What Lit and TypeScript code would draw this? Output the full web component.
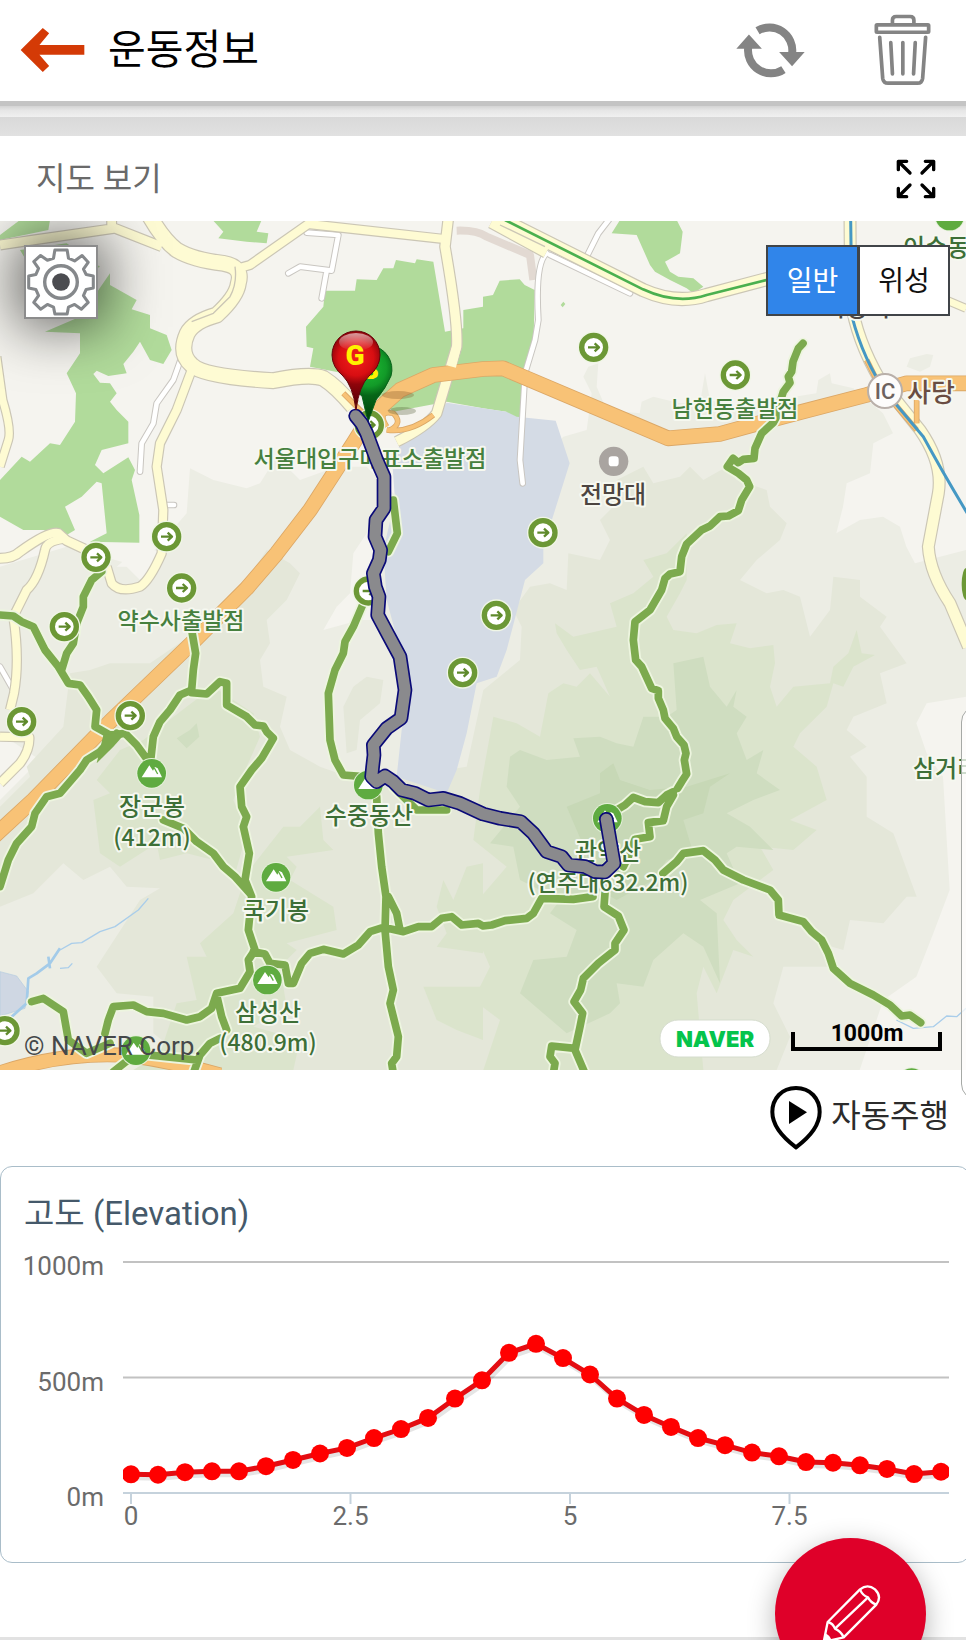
import { LitElement, html, svg, css } from "lit";
import { customElement, state } from "lit/decorators.js";

type Point = [number, number];

/* Terrain and road geometry is stored at three units per map pixel. */
const HILLS: { fill: string; d: string }[] = [
  {
    fill: "#ecede4",
    d: "M570 1405L640 1440 740 1465 780 1450 830 1370 900 1440 1010 1400 1100 1400 1200 1500 1500 1500 1690 1310 1760 1290 1775 1180 1750 1130 1765 1100 1795 1090 1790 1160 1820 1230 1919 1240 1925 1205 1960 1190 2040 1210 2100 1210 2115 1120 2130 1200 2200 1220 2449 1180 2455 1140 2490 1120 2495 1150 2560 1165 2649 1240 2679 1300 2620 1330 2610 1420 2540 1450 2529 1520 2509 1600 2580 1560 2649 1550 2700 1580 2719 1640 2745 1690 2898 1650 2898 2090 2780 2110 2749 2170 2780 2260 2829 2330 2849 2670 2800 2800 2749 2930 2650 3000 2579 3210 0 3210 0 2400 120 2280 0 2200 0 1700 200 1640 420 1700 560 1540Z",
  },
  {
    fill: "#f5f4ef",
    d: "M1060 1660L1100 1600 1120 1560 1130 1660 1120 1860 1080 1860 970 1890 1010 1820 1050 1780ZM420 1640L500 1660 480 1700 420 1740 380 1700 350 1700Z",
  },
  {
    fill: "#ecede4",
    d: "M2720 1100L2730 1075 2780 1062 2800 1065 2790 1100 2760 1115Z",
  },
  {
    fill: "#e4e7d9",
    d: "M0 2420L90 2330 80 2300 190 2180 210 2020 270 2010 330 1990 450 1990 640 1860 740 1740 800 1650 870 1690 900 1720 860 1800 800 1860 810 1930 780 1980 790 2060 860 2090 840 2180 870 2250 960 2300 1100 2350 1200 2330 1400 2300 1450 2070 1560 1980 1565 1880 1540 1830 1590 1760 1650 1750 1700 1770 1705 1660 1800 1680 1830 1620 1800 1560 1860 1500 1850 1440 1930 1400 1960 1450 2040 1430 2070 1400 2110 1440 2180 1400 2210 1440 2300 1470 2310 1520 2360 1570 2340 1620 2270 1680 2220 1740 2300 1780 2350 1770 2400 1790 2430 1910 2490 1830 2500 1730 2580 1740 2580 1790 2660 1850 2640 1880 2720 1990 2640 2020 2660 2110 2560 2150 2540 2190 2600 2240 2550 2270 2600 2330 2600 2450 2680 2500 2750 2690 2720 2690 2650 2770 2550 2760 2530 2850 2460 2830 2500 2900 2350 2900 2320 3010 2370 3110 2330 3210 600 3210 460 3100 460 2990 350 2980 290 2900 420 2700 480 2665 380 2660 330 2600 250 2640 190 2590 100 2680 0 2720Z",
  },
  {
    fill: "#dbe4cc",
    d: "M1480 2150L1550 2170 1620 2210 1645 2080 1690 2050 1730 2060 1770 2020 1830 2090 1790 2000 1740 2010 1700 1950 1670 1900 1665 1870 1720 1910 1850 1880 1830 1810 1900 1780 1960 1730 1930 1680 2000 1660 2060 1600 2060 1740 2040 1780 2000 1850 2020 1890 2090 1900 2150 1875 2210 1870 2190 1930 2250 1945 2320 1935 2325 1990 2310 2060 2330 2120 2380 2060 2490 2050 2500 2000 2545 1960 2570 1890 2585 1960 2625 1965 2560 2000 2530 2060 2500 2050 2480 2120 2400 2200 2380 2240 2450 2300 2480 2400 2370 2460 2450 2490 2380 2550 2280 2540 2320 2610 2200 2700 2170 2760 2210 2820 2260 2870 2200 2850 2150 2980 2110 2900 2090 2980 2110 3210 1450 3210 1500 3060 1420 3000 1470 2900 1400 2740 1520 2600 1420 2520 1440 2370Z",
  },
  {
    fill: "#dbe4cc",
    d: "M560 2120L640 2060 760 2140 780 2210 740 2300 700 2400 740 2500 700 2640 640 2580 560 2560 480 2580 470 2530 360 2600 300 2560 280 2400 330 2380 290 2340 360 2250 430 2220Z",
  },
  {
    fill: "#dbe4cc",
    d: "M860 2570L890 2600 870 2640 1000 2720 1010 2790 860 2830 890 2850 840 2900 860 3020 760 3080 900 3120 880 3210 400 3210 480 3160 530 3010 590 3000 560 2870 620 2870 600 2830 700 2740 740 2620 850 2480 900 2480 960 2420 970 2520 1000 2550Z",
  },
  {
    fill: "#dbe4cc",
    d: "M1449 2590L1400 2600 1360 2700 1330 2640 1310 2720 1340 2800 1310 2840 1449 2860ZM1270 2960L1449 2960 1449 3120 1370 3090 1310 3060Z",
  },
  {
    fill: "#cfddc0",
    d: "M1530 2270L1560 2250 1640 2280 1740 2270 1720 2215 1800 2210 1850 2230 1900 2240 1930 2150 2000 2150 2030 2130 2020 1990 2110 1970 2130 2060 2180 2120 2210 2070 2200 2120 2240 2150 2210 2200 2240 2280 2290 2250 2270 2320 2340 2370 2260 2400 2180 2440 2250 2480 2320 2550 2210 2540 2180 2560 2220 2650 2100 2700 2150 2740 2160 2950 2110 2840 2050 2800 1960 2880 1930 2960 1850 2950 1860 3010 1830 3040 1700 3100 1560 2980 1600 2880 1700 2870 1730 2790 1650 2740 1680 2700 1560 2640 1540 2540 1470 2530 1560 2420 1520 2360Z",
  },
  {
    fill: "#c7d8b6",
    d: "M1700 2420L1800 2380 1800 2320 1840 2290 1860 2340 1950 2370 2060 2360 2190 2320 2130 2360 2110 2440 2050 2460 2080 2560 2000 2580 1960 2640 1850 2700 1780 2660 1760 2560Z",
  },
  { fill: "#e4e7d9", d: "M1060 2060L1100 2030 1150 2040 1140 2110 1080 2160 1070 2250 1040 2260 1030 2120Z" },
  { fill: "#d0dec1", d: "M530 2215L570 2190 590 2170 598 2210 560 2245Z" },
];

const PARKS =
  "M330 820L330 855 410 900 395 928 450 945 450 985 500 1005 515 1050 490 1092 450 1080 420 1025 400 1055 370 1092 380 1120 325 1128 290 1112 280 1122 300 1148 330 1150 350 1180 330 1205 350 1230 385 1265 385 1330 305 1350 285 1395 310 1420 385 1372 405 1410 395 1440 418 1545 418 1628 270 1625 320 1600 305 1450 290 1445 245 1490 195 1520 225 1590 200 1605 130 1590 70 1590 0 1550 0 1440 65 1370 90 1385 150 1330 180 1335 225 1265 228 1180 200 1120 240 1060 240 1000 135 995 240 950Z" +
  "M0 705L60 660 150 660 145 690 0 720Z" +
  "M60 750L200 730 300 800 200 850 90 800Z" +
  "M638 660L785 660 770 695 805 700 800 730 740 725 655 715 670 695Z" +
  "M975 872L1065 872 1070 838 1130 840 1150 805 1180 805 1188 780 1245 790 1250 778 1300 785 1335 995 1390 985 1390 930 1449 920 1449 890 1479 885 1499 842 1559 838 1574 855 1604 870 1600 1060 1579 1140 1568 1170 1549 1350 1514 1320 1519 1235 1449 1225 1340 1205 1180 1235 1080 1140 1030 1120 930 1100 940 1045 920 1040 918 980 970 920Z" +
  "M1835 700L1860 660 2030 660 2048 695 2040 760 1995 785 2010 815 2035 830 2080 835 2110 860 2080 880 2060 865 2010 840 1965 815 1950 795 1910 705Z" +
  "M1682 915L1690 905 1696 912 1688 922Z";

const CAMPUS =
  "M1340 1208L1449 1225 1519 1235 1550 1250 1667 1262 1709 1390 1665 1530 1630 1640 1630 1690 1575 1740 1520 1950 1490 2030 1430 2050 1400 2200 1370 2310 1340 2380 1190 2330 1205 2190 1230 2060 1160 1800 1150 1650 1185 1500 1175 1360 1290 1270Z";

const YELLOW_ROADS: { w: number; d: string }[] = [
  { w: 26, d: "M0 735L100 720 345 685 485 740M335 655V690" },
  {
    w: 44,
    d: "M450 650Q490 720 530 750Q580 780 670 790Q730 800 715 850Q710 890 650 945Q580 965 562 1000Q535 1060 575 1095Q610 1130 820 1142Q930 1120 970 1135Q1010 1160 1060 1220",
  },
  { w: 24, d: "M715 805L750 795 925 672 1340 718" },
  { w: 28, d: "M1345 655L1335 740Q1375 970 1370 1040L1310 1240Q1280 1280 1190 1325" },
  {
    w: 24,
    d: "M575 1110L530 1230 480 1330 470 1400 490 1530 485 1660Q450 1740 420 1760Q360 1780 335 1750L320 1700",
  },
  { w: 22, d: "M-10 1070L8 1200Q35 1290 25 1320L0 1400" },
  { w: 26, d: "M0 1675Q40 1675 60 1655Q150 1590 175 1600L200 1622 260 1650" },
  {
    w: 24,
    d: "M200 1616Q140 1620 135 1650Q115 1740 80 1770L40 1850Q60 1980 42 2080L30 2130M0 2210L88 2212Q90 2250 60 2290L0 2350",
  },
  { w: 36, d: "M1500 655L1929 870Q2030 915 2120 885L2320 832M1475 665L1640 755" },
  { w: 20, d: "M2820 892L2898 925" },
  {
    w: 32,
    d: "M2550 655L2552 900Q2570 1020 2640 1140L2760 1290Q2830 1390 2815 1480Q2800 1560 2785 1640Q2790 1720 2850 1810L2905 1940",
  },
];

const WHITE_ROADS =
  "M545 1070L520 1140 470 1210 460 1270 425 1330 420 1415M920 698L1015 705 995 812 900 800 865 820M980 812L965 895M1830 655L1795 700 1760 770M1650 765L1890 880M1640 760Q1605 790 1615 960L1605 1020 1575 1120 1560 1380 1568 1450M490 1515H522M0 2000L40 2070M2310 880L2400 875";

const ORANGE_ROADS: { w: number; d: string }[] = [
  { w: 12, d: "M1030 1180L1090 1240M1160 1290Q1230 1300 1300 1245M1160 1280Q1130 1230 1180 1240Q1210 1270 1170 1290M2600 1080L2640 1160 2750 1290M2750 1200V1270" },
  {
    w: 42,
    d: "M-30 2520L100 2400 330 2165 590 1915 740 1765 830 1660 930 1530 1060 1330 1110 1250 1200 1170 1300 1125 1449 1107 1509 1105 2004 1315 2159 1302 2349 1250 2599 1185 2720 1150 2898 1150",
  },
  { w: 40, d: "M-20 3225Q200 3150 400 3168Q520 3185 660 3225" },
];

const TRAILS =
  "M2409 1030L2395 1045 2379 1085 2375 1115 2365 1130 2370 1148 2350 1175 2339 1210 2335 1240 2320 1268 2285 1300 2265 1345 2262 1375 2230 1378 2215 1388 2199 1375 2182 1400 2215 1420 2240 1440 2249 1460 2225 1500 2215 1532 2185 1548 2160 1550 2130 1578 2105 1590 2060 1632 2045 1670 2040 1715 2010 1722 1995 1735 1985 1770 1950 1830 1905 1865 1900 1920 1907 1980 1925 2000 1955 2065 1975 2072 1975 2095 1990 2130 1995 2155 2020 2185 2030 2210 2052 2235 2058 2260 2053 2280 2060 2322 2045 2345 2033 2365" +
  "M2020 2375L2000 2385 1975 2408 1935 2405 1900 2392 1875 2415 1850 2430M2020 2385L2000 2420 1990 2462 1945 2468 1950 2510 1905 2518 1890 2560 1870 2600" +
  "M1989 2620L2030 2585 2050 2560 2110 2552 2145 2580 2170 2610 2230 2640 2310 2670 2335 2700 2337 2745 2410 2765 2435 2795 2465 2820 2485 2860 2500 2905 2550 2950 2620 2985 2670 3015 2705 3048 2730 3045 2762 3068" +
  "M1815 2680L1812 2720 1855 2748 1872 2790 1845 2830 1845 2850 1795 2890 1750 2935 1742 2970 1722 3005 1748 3040 1740 3080 1725 3150 1755 3220M1725 3145L1655 3138 1650 3170 1665 3190 1660 3220" +
  "M1779 2690L1720 2698 1625 2695 1600 2740 1580 2755 1515 2762 1475 2775 1449 2778 1435 2770 1385 2775 1355 2750 1325 2755 1295 2780 1255 2780 1210 2795 1150 2782 1110 2795 1075 2835 1030 2862 970 2848 930 2860 905 2890 880 2950 865 2950 855 2895 810 2890 795 2862 760 2855" +
  "M575 1890L587 1960 580 2010 575 2070 540 2085 510 2130 480 2165 460 2210 450 2300M575 2078L620 2082 660 2045 680 2050 680 2115 740 2150 765 2175 790 2178 800 2195 820 2215 785 2275 755 2310 720 2360 725 2420 740 2450 730 2480 748 2560 735 2640 755 2690 745 2790 765 2850 745 2880 750 2915 720 2965 650 2980 635 3025 600 3050 560 3060 490 3040 440 3035 400 3015 340 3020 325 3060 315 3100" +
  "M650 2985L665 3050 680 3090M660 3115L630 3130 600 3165 580 3220" +
  "M0 1845L40 1848 65 1865 100 1880 135 1950 175 2000 205 2050 240 2055 265 2090 290 2130 285 2180 330 2205 375 2200 410 2235 450 2290M185 2010L200 1960 220 1930 230 1870 250 1820 250 1790 275 1740 305 1715" +
  "M350 2200L300 2255 260 2280 240 2310 180 2380 140 2390 105 2440 95 2480 50 2530 25 2580 0 2660M490 2460L550 2485 590 2525 640 2560 670 2600 705 2630 750 2680" +
  "M1090 1810L1060 1880 1035 1925 1030 1960 1005 2010 985 2080 990 2220 1005 2280 1030 2325 1090 2330M1130 2390L1135 2500 1145 2600 1158 2690 1155 2790 1165 2900 1180 2970 1170 3010 1195 3110 1190 3170 1175 3190 1180 3220M1165 2690L1190 2740 1200 2790M1180 2360L1250 2430 1340 2430" +
  "M1180 1500L1192 1600 1165 1655" +
  "M95 3005L130 2995 190 3035 205 3120 260 3160 330 3130M400 3160L590 3180M340 3215L410 3160";

const ROUTE =
  "M1067 1248L1085 1270 1100 1300 1130 1380 1152 1430 1152 1525 1128 1560 1125 1610 1142 1650 1138 1680 1120 1720 1126 1760 1137 1790 1133 1845 1165 1905 1200 1970 1215 2070 1203 2155 1160 2185 1120 2235 1122 2265 1118 2300 1115 2330 1130 2345 1155 2328 1180 2345 1205 2370 1245 2380 1285 2400 1330 2395 1380 2410 1449 2442 1500 2455 1562 2465 1600 2500 1640 2555 1685 2570 1705 2595 1755 2600 1785 2615 1815 2616 1842 2590 1819 2458";

const TRAILHEADS: Point[] = [
  [1781, 1042], [2206, 1125], [500, 1610], [288, 1672], [545, 1764], [193, 1880], [65, 2165],
  [391, 2147], [1105, 1773], [1388, 2018], [1629, 1598], [1489, 1846], [15, 3092], [1108, 1275],
];

const PEAKS: Point[] = [
  [455, 2320], [828, 2632], [802, 2940], [408, 3152], [1105, 2355], [1822, 2455], [2849, 648], [2735, 3248],
];

interface Label {
  x: number;
  y: number;
  text: string;
  kind: "start" | "peak" | "height" | "place" | "junction";
}

const LABELS: Label[] = [
  { x: 370, y: 467, text: "서울대입구매표소출발점", kind: "start" },
  { x: 735, y: 417, text: "남현동출발점", kind: "start" },
  { x: 181, y: 629, text: "약수사출발점", kind: "start" },
  { x: 936, y: 256, text: "이수동", kind: "peak" },
  { x: 946, y: 777, text: "삼거리", kind: "peak" },
  { x: 613, y: 503, text: "전망대", kind: "place" },
  { x: 857, y: 316, text: "사당역", kind: "place" },
  { x: 931, y: 402, text: "사당", kind: "junction" },
  { x: 152, y: 815, text: "장군봉", kind: "peak" },
  { x: 152, y: 846, text: "(412m)", kind: "height" },
  { x: 369, y: 824, text: "수중동산", kind: "peak" },
  { x: 276, y: 919, text: "국기봉", kind: "peak" },
  { x: 268, y: 1021, text: "삼성산", kind: "peak" },
  { x: 268, y: 1051, text: "(480.9m)", kind: "height" },
  { x: 608, y: 860, text: "관악산", kind: "peak" },
  { x: 608, y: 891, text: "(연주대632.2m)", kind: "height" },
];

@customElement("trail-map")
export class TrailMap extends LitElement {
  @state() private layer: "normal" | "satellite" = "normal";

  static styles = css`
    :host {
      display: block;
      position: relative;
      overflow: hidden;
      font-family: Roboto, "Noto Sans CJK KR", sans-serif;
    }
    .canvas {
      display: block;
      width: 100%;
      height: auto;
    }
    .line {
      fill: none;
      stroke-linejoin: round;
    }
    .round {
      stroke-linecap: round;
    }
    .label {
      font-family: "Noto Sans CJK KR", sans-serif;
      font-weight: 500;
      text-anchor: middle;
      paint-order: stroke;
      stroke: #f6f8f0;
      stroke-width: 4px;
      stroke-linejoin: round;
    }
    .start {
      font-size: 23px;
      fill: #46803e;
    }
    .peak {
      font-size: 24px;
      fill: #3d6f37;
    }
    .height {
      font-size: 23px;
      fill: #3d6f37;
    }
    .place {
      font-size: 24px;
      fill: #4c4541;
    }
    .junction {
      font-size: 26px;
      fill: #6a4d42;
    }
    .interchange {
      font: 500 22px Roboto, sans-serif;
      text-anchor: middle;
      fill: #6d625e;
    }
    .pin-letter {
      font: 900 28px Roboto, sans-serif;
      text-anchor: middle;
      fill: #fff200;
    }
    .credit {
      font: 400 26px Roboto, sans-serif;
      fill: #45484a;
    }
    .brand {
      font: 900 22px Inter, Roboto, sans-serif;
      text-anchor: middle;
      fill: #05c44c;
    }
    .scale {
      font: 700 23px Roboto, sans-serif;
      text-anchor: middle;
      fill: #000;
    }
    button {
      margin: 0;
      padding: 0;
      font: inherit;
      cursor: pointer;
    }
    .settings {
      position: absolute;
      top: 24px;
      left: 24px;
      display: grid;
      place-items: center;
      width: 74px;
      height: 74px;
      box-sizing: border-box;
      border: 2px solid #8c8c8c;
      background: #fff;
      box-shadow: 0 0 56px 8px rgba(0, 0, 0, 0.6);
    }
    .settings svg {
      width: 68px;
      height: 68px;
    }
    .layers {
      position: absolute;
      top: 24px;
      right: 16px;
      display: flex;
      box-sizing: border-box;
      height: 71px;
      border: 2px solid #404448;
      background: #fff;
    }
    .layers button {
      width: 89px;
      padding-bottom: 3px;
      border: 0;
      background: #fff;
      color: #111;
      font-size: 28px;
    }
    .layers button + button {
      width: 91px;
      border-left: 3px solid #404448;
    }
    .layers .active {
      background: #3085ea;
      color: #fff;
    }
  `;

  private trailhead([x, y]: Point) {
    return svg`<g transform="translate(${x} ${y})">
      <circle r="48" fill="#f0f6e6"></circle>
      <circle r="36" fill="#fff" stroke="#6c9836" stroke-width="16"></circle>
      <path d="M-17 0H14M3 -12L16 0 3 12" class="line" stroke="#5f8a2c" stroke-width="7"></path>
    </g>`;
  }

  private peak([x, y]: Point) {
    return svg`<g transform="translate(${x} ${y})">
      <circle r="46" fill="#e4f0d8"></circle>
      <circle r="43" fill="#5fab40"></circle>
      <path d="M-30 12L-7 -24 4 -8 10 -19 18 -15 31 12Z" fill="#fff"></path>
      <path d="M8 -16L18 2" class="line" stroke="#5fab40" stroke-width="4"></path>
    </g>`;
  }

  render() {
    return html`
      <svg class="canvas" viewBox="0 221 966 849" role="img" aria-label="관악산 등산 경로 지도">
        <defs>
          <radialGradient id="goal" gradientUnits="userSpaceOnUse" cx="356" cy="358" r="44">
            <stop offset="0" stop-color="#f2201c"></stop>
            <stop offset="0.4" stop-color="#d80e12"></stop>
            <stop offset="0.6" stop-color="#8e040a"></stop>
            <stop offset="1" stop-color="#5c0006"></stop>
          </radialGradient>
          <radialGradient id="begin" gradientUnits="userSpaceOnUse" cx="368" cy="368" r="46">
            <stop offset="0" stop-color="#1fbd35"></stop>
            <stop offset="0.4" stop-color="#129a28"></stop>
            <stop offset="0.6" stop-color="#066618"></stop>
            <stop offset="1" stop-color="#034a0c"></stop>
          </radialGradient>
          <linearGradient id="gloss" x1="0" y1="0" x2="0" y2="1">
            <stop offset="0" stop-color="#fff" stop-opacity="0.6"></stop>
            <stop offset="1" stop-color="#fff" stop-opacity="0"></stop>
          </linearGradient>
        </defs>
        <rect y="221" width="966" height="849" fill="#f5f4ef"></rect>
        <g transform="scale(0.333333)">
          ${HILLS.map((h) => svg`<path d=${h.d} fill=${h.fill}></path>`)}
          <path d=${PARKS} fill="#b1db9b"></path>
          <path d=${CAMPUS} fill="#d4dbe5"></path>
          <path d="M0 2915L50 2928 85 2975 75 3025 0 3048Z" fill="#cfd7e3" stroke="#b4cbe0" stroke-width="2"></path>
          <path class="line" d="M30 3055L80 3010 85 2935 110 2920 150 2890 180 2845M145 2870L150 2905" stroke="#a3cbe9" stroke-width="8"></path>
          <path class="line" d="M180 2850L215 2830 245 2828 300 2795 345 2780 415 2730 445 2695M180 2905L205 2903 217 2890M2689 3060L2740 3085 2800 3080 2840 3048 2870 3050 2898 3025" stroke="#a9cdea" stroke-width="4"></path>
          <path class="line" d="M1370 692Q1430 690 1460 710L1590 765 1600 840" stroke="#e2d9d2" stroke-width="24"></path>
          <path class="line round" d=${WHITE_ROADS} stroke="#c9c6c1" stroke-width="20"></path>
          <path class="line round" d=${WHITE_ROADS} stroke="#fff" stroke-width="14"></path>
          ${YELLOW_ROADS.map((r) => svg`<path class="line" d=${r.d} stroke="#cbc6b5" stroke-width=${r.w + 7}></path>`)}
          ${YELLOW_ROADS.map((r) => svg`<path class="line" d=${r.d} stroke="#fefbd3" stroke-width=${r.w}></path>`)}
          <path class="line" d="M705 800Q712 850 690 890L640 940 575 965M1500 675L1635 740" stroke="#cbc6b5" stroke-width="4"></path>
          <path class="line" d="M1515 660L1929 868Q2030 915 2120 885L2320 835" stroke="#4bb04f" stroke-width="8"></path>
          ${ORANGE_ROADS.map((r) => svg`<path class="line" d=${r.d} stroke="#dba766" stroke-width=${r.w + 5}></path>`)}
          ${ORANGE_ROADS.map((r) => svg`<path class="line" d=${r.d} stroke="#f8c276" stroke-width=${r.w}></path>`)}
          <path class="line" d="M1370 1040L1355 1100" stroke="#fefbd3" stroke-width="26"></path>
          <path class="line" d="M2552 655L2556 950Q2590 1080 2660 1180L2770 1310Q2830 1420 2905 1545" stroke="#4598c4" stroke-width="9"></path>
          <path class="line round" d=${TRAILS} stroke="#edf5df" stroke-width="34"></path>
          <path class="line round" d=${TRAILS} stroke="#7caa4e" stroke-width="23"></path>
          <path d="M310 2205L380 2195 340 2240 290 2290Z" fill="#7caa4e"></path>
          <ellipse cx="2899" cy="1752" rx="14" ry="48" fill="#6c9836"></ellipse>
          ${TRAILHEADS.map((p) => this.trailhead(p))}
          ${PEAKS.map((p) => this.peak(p))}
          <circle cx="1841" cy="1384" r="44" fill="#a9a4a0"></circle>
          <rect x="1826" y="1369" width="30" height="30" rx="10" fill="#fff"></rect>
        </g>
        ${LABELS.map((l) => svg`<text class="label ${l.kind}" x=${l.x} y=${l.y}>${l.text}</text>`)}
        <circle cx="885" cy="391" r="17" fill="#fdfcfb" stroke="#b9b0aa" stroke-width="2"></circle>
        <text class="interchange" x="885" y="399">IC</text>
        <ellipse cx="398" cy="395" rx="16" ry="4" fill="#7a4f20" opacity="0.3"></ellipse>
        <ellipse cx="402" cy="411" rx="14" ry="4" fill="#4d5530" opacity="0.3"></ellipse>
        <path d="M344 371A24 24 0 1 1 391 376Q386 388 376 400L368 422 362 396Q346 386 344 371Z" fill="url(#begin)" stroke="#08631a"></path>
        <text class="pin-letter" x="370" y="379">S</text>
        <g transform="scale(0.333333)">
          <path class="line round" d=${ROUTE} stroke="#0a0a78" stroke-width="44"></path>
          <path class="line round" d=${ROUTE} stroke="#8a8a8d" stroke-width="34"></path>
        </g>
        <path d="M332 355A24 24 0 1 1 380 355Q380 367 369 376 359 386 356 410 353 386 343 376 332 367 332 355Z" fill="url(#goal)" stroke="#65040a"></path>
        <ellipse cx="356" cy="342" rx="17" ry="9" fill="url(#gloss)"></ellipse>
        <text class="pin-letter" x="355" y="365">G</text>
        <text class="credit" x="24" y="1055">© NAVER Corp.</text>
        <rect x="660" y="1020" width="110" height="37" rx="18" fill="#fff" stroke="#d5dccd"></rect>
        <text class="brand" x="715" y="1047">NAVER</text>
        <path d="M793 1032V1049H940V1032" fill="none" stroke="#000" stroke-width="4"></path>
        <text class="scale" x="867" y="1041">1000m</text>
      </svg>
      <button class="settings" aria-label="지도 설정">
        <svg viewBox="-100 -100 200 200" aria-hidden="true">
          <path
            d="M-18 -94H18L22 -70 40 -62 62 -78 80 -58 66 -38 74 -22 95 -18V18L74 22 66 40 80 60 60 80 40 66 22 74 18 94H-18L-22 74 -40 66 -60 80 -80 60 -66 40 -74 22 -95 18V-18L-74 -22 -66 -40 -80 -60 -60 -78 -40 -64 -22 -70Z"
            fill="#fff" stroke="#85888b" stroke-width="9" stroke-linejoin="round"></path>
          <circle r="48" fill="#fff" stroke="#85888b" stroke-width="10"></circle>
          <circle r="26" fill="#4b4c50"></circle>
        </svg>
      </button>
      <div class="layers" role="group" aria-label="지도 종류">
        <button class=${this.layer === "normal" ? "active" : ""} @click=${() => (this.layer = "normal")}>일반</button>
        <button class=${this.layer === "satellite" ? "active" : ""} @click=${() => (this.layer = "satellite")}>위성</button>
      </div>
    `;
  }
}

/* Elevation samples in metres, evenly spaced along the route. */
const ELEVATION = [
  81, 79, 90, 94, 94, 116, 143, 171, 195, 238, 277, 325, 409, 488, 607, 646, 584, 513, 409, 338,
  286, 238, 207, 175, 159, 134, 131, 120, 104, 82, 92,
];
const Y_TICKS = [1000, 500, 0];
const X_TICKS = [0, 2.5, 5, 7.5];

@customElement("elevation-chart")
export class ElevationChart extends LitElement {
  static styles = css`
    :host {
      display: block;
    }
    .plot {
      display: block;
      width: 100%;
      height: auto;
    }
    text {
      font: 400 26px Roboto, sans-serif;
      fill: #6b6b6b;
    }
    .y {
      text-anchor: end;
    }
    .x {
      text-anchor: middle;
    }
    .grid {
      stroke: #c2c2c2;
      stroke-width: 2px;
    }
    .axis {
      stroke: #c5d2dc;
      stroke-width: 2px;
    }
    .shadow {
      fill: none;
      stroke: #000;
      stroke-opacity: 0.1;
      stroke-width: 6px;
    }
    .series {
      fill: none;
      stroke: #e30d12;
      stroke-width: 5px;
    }
    .dot {
      fill: #ff0000;
    }
  `;

  private y(metres: number) {
    return 276 - (metres * 231) / 1000;
  }

  render() {
    const pts = ELEVATION.map((m, i): Point => [130 + i * 27, this.y(m)]);
    const line = pts.map((p) => p.join(",")).join(" ");
    return html`<svg class="plot" viewBox="0 0 968 345" role="img" aria-label="고도 그래프">
      <defs>
        <clipPath id="area"><rect x="122" y="20" width="826" height="270"></rect></clipPath>
      </defs>
      ${Y_TICKS.map(
        (m) => svg`
          <line class=${m ? "grid" : "axis"} x1="122" x2="948" y1=${this.y(m)} y2=${this.y(m)}></line>
          <text class="y" x="103" y=${this.y(m) + 13}>${m}m</text>`
      )}
      ${X_TICKS.map(
        (km) => svg`
          <line class="axis" x1=${130 + km * 87.8} x2=${130 + km * 87.8} y1="276" y2="287"></line>
          <text class="x" x=${130 + km * 87.8} y="308">${km}</text>`
      )}
      <g clip-path="url(#area)">
        <polyline class="shadow" points=${line} transform="translate(2 3)"></polyline>
        <polyline class="series" points=${line}></polyline>
        ${pts.map(([x, y]) => svg`<circle class="dot" cx=${x} cy=${y} r="9"></circle>`)}
      </g>
    </svg>`;
  }
}

@customElement("app-root")
export class AppRoot extends LitElement {
  static styles = css`
    :host {
      display: flex;
      flex-direction: column;
      position: relative;
      min-height: 100vh;
      box-sizing: border-box;
      overflow: hidden;
      background: #fff;
      border-bottom: 3px solid #e2e2e2;
      font-family: Roboto, "Noto Sans CJK KR", sans-serif;
      color: #333;
    }
    h1,
    h2,
    h3 {
      margin: 0;
      font-weight: 400;
    }
    button {
      display: flex;
      align-items: center;
      margin: 0;
      padding: 0;
      border: 0;
      background: none;
      font: inherit;
      color: inherit;
      cursor: pointer;
    }
    .bar {
      display: flex;
      align-items: center;
      box-sizing: border-box;
      height: 106px;
      padding: 0 35px 2px 20px;
      border-bottom: 5px solid #c4c4c4;
    }
    .bar h1 {
      flex: 1;
      margin-left: 23px;
      font-size: 41px;
      line-height: 60px;
      color: #000;
    }
    .actions {
      display: flex;
      align-items: center;
      gap: 69px;
    }
    .back svg {
      width: 65px;
      height: 46px;
    }
    .refresh svg {
      width: 69px;
      height: 58px;
    }
    .trash svg {
      width: 57px;
      height: 72px;
    }
    .fade {
      height: 11px;
      background: linear-gradient(#d4d4d4, #e6e6e6 40%, #f0f0f0);
    }
    .gap {
      height: 19px;
      background: linear-gradient(#d9d9d9, #e1e1e1);
    }
    .section {
      display: flex;
      align-items: center;
      justify-content: space-between;
      height: 85px;
      padding: 0 30px 0 36px;
    }
    .section h2 {
      font-size: 32px;
      line-height: 48px;
      color: #6a6a6a;
    }
    .expand svg {
      width: 40px;
      height: 40px;
    }
    .follow {
      display: flex;
      justify-content: flex-end;
      height: 96px;
      padding-right: 17px;
    }
    .follow button {
      gap: 9px;
      font-size: 32px;
      color: #2b2b2b;
    }
    .follow span {
      padding-bottom: 4px;
      line-height: 48px;
    }
    .follow svg {
      width: 52px;
      height: 64px;
    }
    .card {
      margin-right: -4px;
      border: 1px solid #a9bdc9;
      border-radius: 12px;
    }
    .card h3 {
      padding: 22px 23px 0;
      font-size: 33px;
      line-height: 50px;
      height: 28px;
      color: #45596a;
    }
    .drawer {
      position: absolute;
      top: 706px;
      right: -31px;
      width: 34px;
      height: 392px;
      border: 1px solid #a6a9a6;
      border-radius: 16px;
      background: rgba(255, 255, 255, 0.75);
    }
    .edit {
      position: fixed;
      right: 40px;
      bottom: -49px;
      justify-content: center;
      width: 151px;
      height: 151px;
      border-radius: 50%;
      background: #df0029;
      box-shadow: 0 8px 28px rgba(0, 0, 0, 0.3);
    }
    .edit svg {
      width: 60px;
      height: 60px;
    }
  `;

  render() {
    return html`
      <header class="bar">
        <button class="back" aria-label="뒤로">
          <svg viewBox="60 80 194 136" aria-hidden="true">
            <path d="M128 82L147 98 118 133H252V162H118L147 196 128 214 62 148Z" fill="#d43a06"></path>
          </svg>
        </button>
        <h1>운동정보</h1>
        <div class="actions">
          <button class="refresh" aria-label="새로고침">
            <svg viewBox="759 61 208 172" aria-hidden="true">
              <g fill="none" stroke="#848484" stroke-width="24">
                <path d="M824 89A69 69 0 0 1 928 158"></path>
                <path d="M796 138A69 69 0 0 0 902 206"></path>
              </g>
              <path d="M760 143L798 100 837 143ZM889 153H966L928 196Z" fill="#848484"></path>
            </svg>
          </button>
          <button class="trash" aria-label="삭제">
            <svg viewBox="1174 40 170 214" aria-hidden="true">
              <g fill="none" stroke="#848484" stroke-width="11" stroke-linecap="round" stroke-linejoin="round">
                <path d="M1229 66V58Q1229 47 1240 47H1282Q1293 47 1293 58V66"></path>
                <rect x="1181" y="72" width="156" height="22" rx="2"></rect>
                <path d="M1191 109L1200 232Q1202 246 1216 246H1304Q1317 246 1319 232L1328 109"></path>
                <path d="M1224 125L1229 218M1260 125V218M1297 125L1292 218"></path>
              </g>
            </svg>
          </button>
        </div>
      </header>
      <div class="fade"></div>
      <div class="gap"></div>
      <div class="section">
        <h2>지도 보기</h2>
        <button class="expand" aria-label="전체 화면">
          <svg viewBox="0 0 120 120" aria-hidden="true">
            <g fill="none" stroke="#000" stroke-width="10" stroke-linecap="round" stroke-linejoin="round">
              <path d="M42 42L9 9M7 32V7H32"></path>
              <path d="M78 42L111 9M113 32V7H88"></path>
              <path d="M42 78L9 111M7 88V113H32"></path>
              <path d="M78 78L111 111M113 88V113H88"></path>
            </g>
          </svg>
        </button>
      </div>
      <trail-map></trail-map>
      <div class="follow">
        <button>
          <svg viewBox="0 0 156 192" aria-hidden="true">
            <path d="M78 6C35 6 7 38 7 78C7 122 46 160 78 184C110 160 149 122 149 78C149 38 121 6 78 6Z" fill="none" stroke="#000" stroke-width="12"></path>
            <path d="M57 45L111 79 57 114Z" fill="#000"></path>
          </svg>
          <span>자동주행</span>
        </button>
      </div>
      <section class="card">
        <h3>고도 (Elevation)</h3>
        <elevation-chart></elevation-chart>
      </section>
      <aside class="drawer" aria-hidden="true"></aside>
      <button class="edit" aria-label="기록 편집">
        <svg viewBox="0 0 180 180" aria-hidden="true">
          <g fill="none" stroke="#fff" stroke-width="7" stroke-linejoin="round">
            <path d="M20 114L117 16Q140 -2 162 16Q184 38 166 62L68 160 8 174Z"></path>
            <path d="M20 114Q36 118 42 134Q60 142 68 160M42 134L141 40M117 16Q124 34 141 40Q148 56 166 62"></path>
          </g>
          <path d="M8 174L14 148Q26 154 32 168Z" fill="#fff"></path>
        </svg>
      </button>
    `;
  }
}
